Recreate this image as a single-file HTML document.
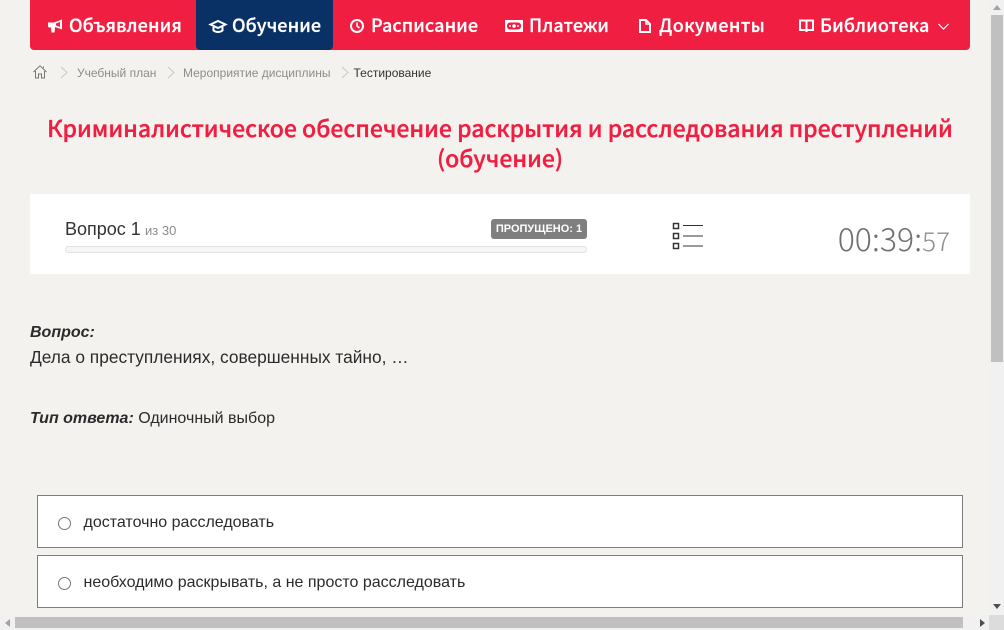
<!DOCTYPE html>
<html><head><meta charset="utf-8">
<style>
html,body{margin:0;padding:0;width:1004px;height:630px;overflow:hidden;background:#f3f2ef;font-family:"Liberation Sans",sans-serif;color:#2b2b2b}
.a{position:absolute;white-space:nowrap}
.nav{left:30px;top:0;width:940px;height:50px;background:#f01e40;border-radius:0 0 4px 4px}
.active{left:196px;top:0;width:137px;height:50px;background:#0a3166;border-radius:0 0 4px 4px}
.n{top:12px;font:500 18px/27px "Noto Sans CJK SC","DejaVu Sans",sans-serif;color:#fff;letter-spacing:.1px;-webkit-text-stroke:.25px #fff}
.t{left:30px;width:940px;text-align:center;font:500 23px/30px "Noto Sans CJK SC","DejaVu Sans",sans-serif;color:#f01e40;-webkit-text-stroke:.35px #f01e40}
.bc{top:65px;font-size:12px;line-height:16px;color:#8c8c8c}
.opt{left:37px;width:924px;height:51px;background:#fff;border:1px solid #7d7d7d}
.r{left:58px;width:11px;height:11px;border:1px solid #767676;border-radius:50%;background:#fff}
.ot{left:83.500px;font-size:16px;line-height:20px;color:#2b2b2b}
svg{position:absolute;overflow:visible}
</style></head><body>
<div class="a nav"></div><div class="a active"></div>

<svg style="left:48px;top:19px" width="15" height="14" viewBox="0 0 15 14"><path d="M0 3.500h6L14 .5v10L7 8v1l-.5 4.500H3.500L3 8.500H1L0 7.500z" fill="#fff"/><path d="M8 4.500 12 3v5L8 6.500z" fill="#f01e40"/></svg>
<div class="a n" style="left:69px">Объявления</div>

<svg style="left:209px;top:19px" width="18" height="15" viewBox="0 0 18 15" fill="none" stroke="#fff" stroke-width="2"><path d="M1.500 5.500 9 2l7.500 3.500L9 9z"/><path d="M4.500 8v3.500c2.500 2 6.500 2 9 0V8"/></svg>
<div class="a n" style="left:232px">Обучение</div>

<svg style="left:350px;top:19px" width="14" height="14" viewBox="0 0 14 14" fill="none" stroke="#fff" stroke-width="2"><circle cx="7" cy="7" r="6"/><path d="M7 3.500V7l2.500 2" stroke-width="1.500"/></svg>
<div class="a n" style="left:371px">Расписание</div>

<svg style="left:505px;top:20px" width="18" height="12" viewBox="0 0 18 12"><rect width="18" height="12" fill="#fff"/><rect x="2" y="2.500" width="14" height="7" rx="3" fill="#f01e40"/><circle cx="9" cy="6" r="1.800" fill="#fff"/><circle cx="5" cy="6" r="1" fill="#fff"/><circle cx="13" cy="6" r="1" fill="#fff"/></svg>
<div class="a n" style="left:529px">Платежи</div>

<svg style="left:639px;top:19px" width="12" height="14" viewBox="0 0 12 14" fill="none" stroke="#fff" stroke-width="2"><path d="M1 1h6l4 4v8H1z"/><path d="M7 1v4h4" stroke-width="1.500"/></svg>
<div class="a n" style="left:659px;letter-spacing:.4px">Документы</div>

<svg style="left:799px;top:19px" width="15" height="14" viewBox="0 0 15 14" fill="none" stroke="#fff" stroke-width="2"><path d="M1 1.500h6.500V11H1zM7.500 1.500H14V11H7.500M7.500 11v2"/></svg>
<div class="a n" style="left:820px;letter-spacing:.2px">Библиотека</div>
<svg style="left:938px;top:23px" width="11" height="7" viewBox="0 0 11 7" fill="none" stroke="#fff" stroke-width="1.200"><path d="M.5 1l5 5 5-5"/></svg>

<svg style="left:33px;top:65px" width="14" height="14" viewBox="0 0 14 14" fill="none" stroke="#777" stroke-width="1"><path d="M.5 7 7 .8 13.500 7M2.500 6v7h3V9h3v4h3V6M10.500 3V1.500"/></svg>
<svg style="left:60px;top:66px" width="8" height="13" viewBox="0 0 8 13" fill="none" stroke="#c8c8c8"><path d="M1 1l6 5.500L1 12"/></svg>
<div class="a bc" style="left:77px">Учебный план</div>
<svg style="left:167px;top:66px" width="8" height="13" viewBox="0 0 8 13" fill="none" stroke="#c8c8c8"><path d="M1 1l6 5.500L1 12"/></svg>
<div class="a bc" style="left:183px">Мероприятие дисциплины</div>
<svg style="left:341px;top:66px" width="8" height="13" viewBox="0 0 8 13" fill="none" stroke="#c8c8c8"><path d="M1 1l6 5.500L1 12"/></svg>
<div class="a bc" style="left:353.500px;color:#333">Тестирование</div>

<div class="a t" style="top:112px">Криминалистическое обеспечение раскрытия и расследования преступлений</div>
<div class="a t" style="top:142px">(обучение)</div>

<div class="a" style="left:30px;top:194px;width:940px;height:80px;background:#fff"></div>
<div class="a" style="left:65px;top:218px;font-size:18px;line-height:22px;color:#333">Вопрос 1</div>
<div class="a" style="left:145px;top:220px;font-size:13px;line-height:22px;color:#8c8c8c">из 30</div>
<div class="a" style="left:491px;top:219px;width:96px;height:20px;background:#7f7f7f;border-radius:3px;color:#fff;font:bold 11px/21px 'Liberation Sans',sans-serif;text-align:center">ПРОПУЩЕНО: 1</div>
<div class="a" style="left:65px;top:246px;width:520px;height:5px;background:#f6f6f6;border:1px solid #e2e2e2;border-radius:4px"></div>

<svg style="left:672px;top:222px" width="32" height="28" viewBox="0 0 32 28" fill="none" stroke="#333"><rect x="1.500" y="1.500" width="5" height="5" stroke-width="1.500"/><rect x="1.500" y="11.500" width="5" height="5" stroke-width="1.500"/><rect x="1.500" y="21.500" width="5" height="5" stroke-width="1.500"/><path d="M11 3.500h20M11 14h20M11 24h20"/></svg>

<div class="a" style="right:54px;top:217px;font:300 32px/42px 'Noto Sans CJK SC','DejaVu Sans',sans-serif;color:#707070">00:39:<span style="font-size:26px;color:#909090">57</span></div>

<div class="a" style="left:30px;top:323px;font-size:16px;line-height:20px;font-weight:bold;font-style:italic">Вопрос:</div>
<div class="a" style="left:30px;top:347px;font-size:17.330px;line-height:20px">Дела о преступлениях, совершенных тайно, …</div>
<div class="a" style="left:30px;top:409px;font-size:16px;line-height:20px"><b><i>Тип ответа:</i></b> Одиночный выбор</div>

<div class="a opt" style="top:495px"></div>
<div class="a r" style="top:517px"></div>
<div class="a ot" style="top:513px">достаточно расследовать</div>
<div class="a opt" style="top:555px"></div>
<div class="a r" style="top:577px"></div>
<div class="a ot" style="top:573px">необходимо раскрывать, а не просто расследовать</div>

<div class="a" style="left:989px;top:0;width:15px;height:630px;background:#f1f1f1"></div>
<div class="a" style="left:991px;top:15px;width:12px;height:347px;background:#c0c0c0"></div>
<div class="a" style="left:0;top:615px;width:989px;height:15px;background:#f1f1f1"></div>
<div class="a" style="left:15px;top:617px;width:948px;height:11px;background:#c0c0c0"></div>
<div class="a" style="left:989px;top:615px;width:15px;height:15px;background:#dcdcdc"></div>
<svg style="left:993px;top:5px" width="8" height="5"><path d="M0 5 4 0l4 5z" fill="#a3a3a3"/></svg>
<svg style="left:993px;top:604px" width="8" height="5"><path d="M0 0h8L4 5z" fill="#505050"/></svg>
<svg style="left:5px;top:619px" width="5" height="8"><path d="M5 0v8L0 4z" fill="#a3a3a3"/></svg>
<svg style="left:980px;top:619px" width="5" height="8"><path d="M0 0v8l5-4z" fill="#505050"/></svg>
</body></html>
